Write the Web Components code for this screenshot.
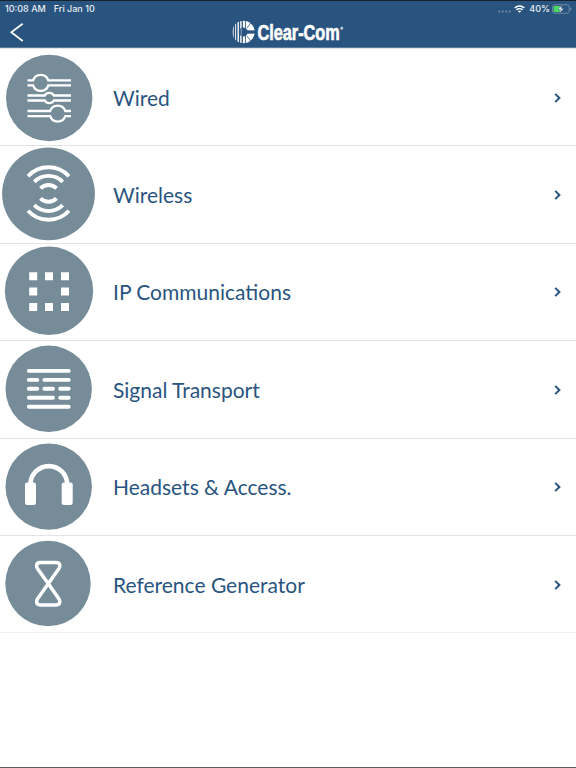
<!DOCTYPE html>
<html lang="en">
<head>
<meta charset="utf-8">
<meta name="viewport" content="width=device-width, initial-scale=1">
<title>Clear-Com</title>
<style>
    html, body {
        margin: 0;
        height: 100%;
        background: #fff;
    }
    body {
        --blue: #29547f;
        --slate: #778c99;
        --line: #e3e3e5;
        font-family: Lato, "Liberation Sans", sans-serif;
        overflow: hidden;
    }
</style>
</head>
<body>

<product-app></product-app>

<script>

//top status row
class StatusBar extends HTMLElement {

    constructor() {

        super();

        this.attachShadow({mode: "open"});
        this.shadowRoot.innerHTML = this.template;

    }

    get template() {

        return `
            ${this.styles}
            <div class="left"><span class="time">10:08 AM</span><span class="date">Fri Jan 10</span></div>
            <div class="right">
                <svg class="dots" width="13" height="3" viewBox="0 0 13 3" fill="#7891aa">
                    <circle cx="1.4" cy="1.5" r="1"/><circle cx="4.8" cy="1.5" r="1"/>
                    <circle cx="8.2" cy="1.5" r="1"/><circle cx="11.6" cy="1.5" r="1"/>
                </svg>
                <svg class="wifi" width="11" height="8" viewBox="0 0 11 8" fill="none" stroke="#fff" stroke-width="1.5">
                    <path d="M.7 3A6.9 6.9 0 0 1 10.3 3M2.5 4.9A4.3 4.3 0 0 1 8.5 4.9"/>
                    <path d="M5.5 7.8L3.9 6.2A2.3 2.3 0 0 1 7.1 6.2Z" fill="#fff" stroke="none"/>
                </svg>
                <span class="percent">40%</span>
                <svg class="battery" width="20" height="10" viewBox="0 0 20 10">
                    <rect x=".5" y=".8" width="16.8" height="8.4" rx="2.3" fill="none" stroke="#7891aa" stroke-width=".9"/>
                    <path d="M18.3 3.5q1.2 .4 1.2 1.5t-1.2 1.5z" fill="#7891aa"/>
                    <rect x="1.6" y="1.9" width="6.6" height="6.2" rx="1.1" fill="#4cd964"/>
                    <path d="M10.2 1L5.9 5.6H8.6L7.4 9.2L11.8 4.4H9.1Z" fill="#fff" stroke="#29547f" stroke-width=".4"/>
                </svg>
            </div>
        `;
    }

    get styles() {
        return `
            <style>
                :host {
                    display: flex;
                    justify-content: space-between;
                    height: 16px;
                    box-sizing: border-box;
                    padding: 0 4px 0 5px;
                    border-top: 1px solid #17222f;
                    font: 500 9px/14px Inter, "Liberation Sans", sans-serif;
                    color: #e9eef3;
                }
                .left, .right { display: flex; align-items: center; }
                .left { gap: 8px; }
                .dots { margin: 6px 3px 0 0; }
                .wifi { margin-right: 4px; }
                .percent { margin-right: 2px; letter-spacing: .05px; }
            </style>
        `;
    }

}

//striped C mark and name
class BrandLogo extends HTMLElement {

    constructor() {

        super();

        this.attachShadow({mode: "open"});
        this.shadowRoot.innerHTML = this.template;

    }

    get template() {

        return `
            <style>
                :host { display: block; width: 114px; height: 31px; }
                svg { display: block; overflow: visible; }
                text { font: bold 22.5px "Liberation Sans Narrow", "Liberation Sans", sans-serif; }
            </style>
            <svg width="114" height="31" viewBox="231 16 114 31">
                <defs>
                    <clipPath id="disc"><circle cx="243.4" cy="32" r="11.2"/></clipPath>
                </defs>
                <g clip-path="url(#disc)">
                    <path d="M233.2 20V44M235.6 20V44" stroke="#fff" stroke-width=".9"/>
                    <path d="M238.2 20V44M240.9 20V44" stroke="#fff" stroke-width="1.4"/>
                    <path d="M243.9 20V44" stroke="#fff" stroke-width="2.1"/>
                    <rect x="245.8" y="20" width="10" height="24" fill="#fff"/>
                </g>
                <path d="M243.4 27.4A4.6 4.6 0 0 1 247.6 30.2L255.5 30.6V33.4L247.6 33.8A4.6 4.6 0 0 1 243.4 36.6A4.6 4.6 0 0 1 243.4 27.4Z" fill="#29547f"/>
                <path d="M241.2 28.5V35.5" stroke="#fff" stroke-width=".8" opacity=".6"/>
                <path d="M247 28L250.8 23M247 36L250.8 41" stroke="#29547f" stroke-width=".8"/>
                <text x="257.4" y="39.6" textLength="82.4" lengthAdjust="spacingAndGlyphs" fill="#fff" stroke="#fff" stroke-width=".65">Clear-Com</text>
                <circle cx="341.8" cy="28.2" r="1.2" fill="#a9bbcc" stroke="#d6dfe7" stroke-width=".6"/>
            </svg>
        `;
    }

}

//blue header with back arrow
class AppHeader extends HTMLElement {

    constructor() {

        super();

        this.attachShadow({mode: "open"});
        this.shadowRoot.innerHTML = this.template;

    }

    get template() {

        return `
            <style>
                :host {
                    display: block;
                    height: 48px;
                    box-sizing: border-box;
                    background: var(--blue);
                    border-bottom: 1px solid #5a7b9c;
                }
                nav {
                    display: grid;
                    grid-template-columns: 1fr auto 1fr;
                    align-items: center;
                    height: 31px;
                }
                .back { margin-left: 9px; }
            </style>
            <status-bar></status-bar>
            <nav>
                <svg class="back" width="16" height="20" viewBox="0 0 16 20" fill="none" stroke="#fff" stroke-width="1.7">
                    <path d="M13.7 1.8L2.3 10.3L13.7 19"/>
                </svg>
                <brand-logo></brand-logo>
            </nav>
        `;
    }

}

// pair of wires that bulges round a knob
function wire(cx, cy, r, gap) {

    const dx = Math.sqrt(r * r - gap * gap);
    const y1 = cy - gap;
    const y2 = cy + gap;

    return `M27.5 ${y1}H${cx - dx}A${r} ${r} 0 0 1 ${cx + dx} ${y1}H71
            M27.5 ${y2}H${cx - dx}A${r} ${r} 0 0 0 ${cx + dx} ${y2}H71`;
}

// every icon is drawn in a 100 x 97.4 cell
const icons = {

    wired: `
        <circle cx="49.2" cy="50" r="43.2"/>
        <path class="stroke" stroke-width="2.3" d="${wire(40.7, 34.8, 8, 2.5)}${wire(49.3, 50, 5.2, 2.5)}${wire(57.7, 65.6, 8, 2.6)}"/>`,

    wireless: `
        <circle cx="48.5" cy="48.8" r="46.4"/>
        <path class="stroke" stroke-width="3.9" d="
            M28 31.2A27.8 27.8 0 0 1 69 31.2
            M34.3 36.8A20 20 0 0 1 62.7 36.8
            M40.5 43.3A11.3 11.3 0 0 1 56.5 43.3
            M40.5 53.5A11.3 11.3 0 0 0 56.5 53.5
            M34.3 60.2A20 20 0 0 0 62.7 60.2
            M28 65.8A27.8 27.8 0 0 0 69 65.8"/>`,

    ip: `
        <circle cx="49" cy="47.8" r="44.2"/>
        <path class="solid" d="
            M29.2 29.3h8v8h-8zM45 29.3h8v8h-8zM61 29.3h8v8h-8z
            M29.2 44.6h8v8h-8zM61 44.6h8v8h-8z
            M29.2 60h8v8h-8zM45 60h8v8h-8zM61 60h8v8h-8z"/>`,

    signal: `
        <circle cx="48.7" cy="48.8" r="43.2"/>
        <path class="stroke round" stroke-width="3.9" d="
            M28.8 30.9H68.7
            M28.8 39.9H37.3M44.4 39.9H68.7
            M28.8 48.8H37.3M44.4 48.8H53M60.2 48.8H68.7
            M28.8 57.8H53M60.2 57.8H68.7
            M28.8 66.8H68.7"/>`,

    headset: `
        <circle cx="48.7" cy="48.6" r="43.2"/>
        <path class="stroke" stroke-width="4.6" d="M30.4 47.5V46.5A18.4 18.4 0 0 1 67.2 46.5V47.5"/>
        <rect class="solid" x="25" y="44.4" width="11" height="22.6" rx="2.2"/>
        <rect class="solid" x="61.7" y="44.4" width="11" height="22.6" rx="2.2"/>`,

    hourglass: `
        <circle cx="48" cy="48.5" r="42.7"/>
        <path class="stroke" stroke-width="3.5" stroke-linejoin="round" d="
            M48.2 48.6L37.4 33.4Q36.6 32.2 36.6 30.9Q36.6 27.6 40.2 27.6H56.2Q59.8 27.6 59.8 30.9Q59.8 32.2 59 33.4L37.4 64.1
            Q36.6 65.3 36.6 66.6Q36.6 69.9 40.2 69.9H56.2Q59.8 69.9 59.8 66.6Q59.8 65.3 59 64.1Z"/>`

};

//list row
class ProductRow extends HTMLElement {

    static get observedAttributes() {

        return [ 'icon' ];

    }

    constructor() {

        super();

        this.attachShadow({mode: "open"});

    }

    attributeChangedCallback() {

        this.render();

    }

    render() {

        this.shadowRoot.innerHTML = this.template;

    }

    get template() {

        return `
            <style>
                :host {
                    display: flex;
                    align-items: center;
                    height: 97.4px;
                    box-sizing: border-box;
                    border-top: 1px solid var(--line);
                    color: var(--blue);
                    font-size: 21px;
                    line-height: 30px;
                }
                :host(:last-of-type) {
                    height: 98.4px;
                    border-bottom: 1px solid #efeff0;
                }
                .icon { width: 100px; height: 97.4px; margin: -1px 13px 0 0; flex: none; fill: var(--slate); }
                .stroke { fill: none; stroke: #fff; }
                .round { stroke-linecap: round; }
                .solid { fill: #fff; }
                .label { flex: 1; padding-top: 1px; }
                .arrow { margin: 1px 15.5px 0 0; }
            </style>
            <svg class="icon" viewBox="0 0 100 97.4">${icons[this.getAttribute('icon')]}</svg>
            <span class="label"><slot></slot></span>
            <svg class="arrow" width="7" height="10" viewBox="0 0 7 10" fill="none" stroke="#29547f" stroke-width="2">
                <path d="M1.2 .9L5.4 5L1.2 9.1"/>
            </svg>
        `;
    }

}

//whole screen
class ProductApp extends HTMLElement {

    constructor() {

        super();

        this.attachShadow({mode: "open"});
        this.shadowRoot.innerHTML = this.template;

    }

    get template() {

        return `
            <style>
                :host {
                    display: flex;
                    flex-direction: column;
                    height: 100vh;
                    box-sizing: border-box;
                    border-bottom: 1px solid #5b5b5d;
                }
                main { flex: 1; }
            </style>
            <app-header></app-header>
            <main>
                <product-row icon="wired">Wired</product-row>
                <product-row icon="wireless">Wireless</product-row>
                <product-row icon="ip">IP Communications</product-row>
                <product-row icon="signal">Signal Transport</product-row>
                <product-row icon="headset">Headsets &amp; Access.</product-row>
                <product-row icon="hourglass">Reference Generator</product-row>
            </main>
        `;
    }

}


customElements.define('status-bar', StatusBar);
customElements.define('brand-logo', BrandLogo);
customElements.define('app-header', AppHeader);
customElements.define('product-row', ProductRow);
customElements.define('product-app', ProductApp);

</script>
</body>
</html>
